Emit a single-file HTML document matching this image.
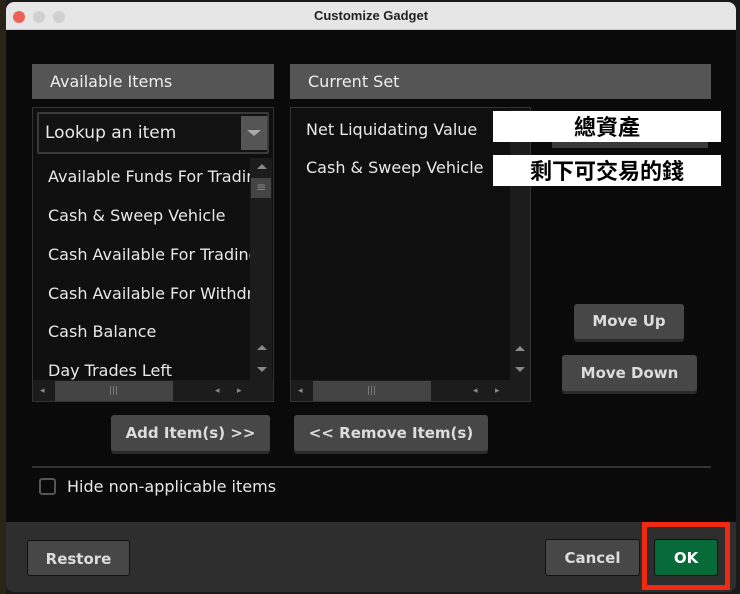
<!DOCTYPE html>
<html><head><meta charset="utf-8"><style>
*{margin:0;padding:0;box-sizing:border-box}
body{width:740px;height:594px;background:#1a1a1a;position:relative;overflow:hidden;font-family:"DejaVu Sans","Liberation Sans",sans-serif;color:#e8e8e8}
.a{position:absolute}
.hdr{background:#555;color:#eee;font-size:16px;padding-left:18px;line-height:35px}
.box{border:1px solid #333;background:#0f0f0f}
.it{position:absolute;font-size:16px;color:#e8e8e8;white-space:nowrap}
.btn{position:absolute;background:#474747;border-radius:3px;color:#ddd;font-weight:bold;font-size:15px;text-align:center;box-shadow:0 3px 0 #2a2a2a}
.cjk{font-family:"Noto Sans CJK TC",sans-serif;font-weight:bold;color:#000;background:#fff;text-align:center;font-size:22px;line-height:31px}
.tri{position:absolute;width:0;height:0}
.g{position:absolute;color:#888;font-size:9px;line-height:10px}
</style></head><body>
<div class="a" style="left:0;top:0;width:6px;height:594px;background:#2a2418"></div>
<div class="a" style="left:6px;top:2px;width:730px;height:590px;background:#0a0a0a;border-radius:8px;overflow:hidden">
 <div class="a" style="left:0;top:0;width:730px;height:28px;background:#e6e6e6;border-bottom:1px solid #c8c8c8"></div>
 <div class="a" style="left:7px;top:9px;width:12px;height:12px;border-radius:50%;background:#ed5f57"></div>
 <div class="a" style="left:27px;top:9px;width:12px;height:12px;border-radius:50%;background:#d0d0d0"></div>
 <div class="a" style="left:47px;top:9px;width:12px;height:12px;border-radius:50%;background:#d0d0d0"></div>
 <div class="a" style="left:0;top:6px;width:730px;text-align:center;font-size:13px;font-weight:bold;color:#222;font-family:'Liberation Sans',sans-serif">Customize Gadget</div>
 <div class="a" style="left:0;top:520px;width:730px;height:70px;background:#2e2e2e"></div>
</div>
<div class="a hdr" style="left:32px;top:64px;width:242px;height:35px">Available Items</div>
<div class="a hdr" style="left:290px;top:64px;width:421px;height:35px">Current Set</div>

<div class="a box" style="left:32px;top:107px;width:242px;height:295px"></div>
<div class="a" style="left:37px;top:112px;width:232px;height:42px;border:2px solid #3a3a3a;background:#121212;border-radius:2px"></div>
<div class="it" style="left:45px;top:123px;font-size:17px">Lookup an item</div>
<div class="a" style="left:241px;top:116px;width:26px;height:34px;background:#555"></div>
<div class="tri" style="left:247px;top:130px;border-left:7px solid transparent;border-right:7px solid transparent;border-top:6px solid #aaa"></div>
<div class="a" style="left:250px;top:158px;width:22px;height:222px;background:#1c1c1c"></div>
<div class="a" style="left:251px;top:178px;width:20px;height:20px;background:#444"></div>
<div class="g" style="left:256px;top:182px;font-size:12px">≡</div>
<div class="tri" style="left:257px;top:164px;border-left:5px solid transparent;border-right:5px solid transparent;border-bottom:5px solid #888"></div>
<div class="tri" style="left:257px;top:345px;border-left:5px solid transparent;border-right:5px solid transparent;border-bottom:5px solid #888"></div>
<div class="tri" style="left:257px;top:367px;border-left:5px solid transparent;border-right:5px solid transparent;border-top:5px solid #888"></div>
<div class="a" style="left:33px;top:380px;width:240px;height:21px;background:#1c1c1c;overflow:hidden"></div>
<div class="a" style="left:55px;top:381px;width:118px;height:20px;background:#444"></div>
<div class="g" style="left:40px;top:386px">◂</div>
<div class="g" style="left:109px;top:386px">|||</div>
<div class="g" style="left:215px;top:386px">◂</div>
<div class="g" style="left:237px;top:386px">▸</div>
<div class="a" style="left:38px;top:159px;width:212px;height:221px;overflow:hidden">
 <div class="it" style="left:10px;top:8px">Available Funds For Trading</div>
 <div class="it" style="left:10px;top:47px">Cash &amp; Sweep Vehicle</div>
 <div class="it" style="left:10px;top:86px">Cash Available For Trading</div>
 <div class="it" style="left:10px;top:125px">Cash Available For Withdrawal</div>
 <div class="it" style="left:10px;top:163px">Cash Balance</div>
 <div class="it" style="left:10px;top:202px">Day Trades Left</div>
</div>

<div class="a box" style="left:290px;top:107px;width:241px;height:295px"></div>
<div class="a" style="left:510px;top:110px;width:20px;height:270px;background:#1c1c1c"></div>
<div class="tri" style="left:515px;top:346px;border-left:5px solid transparent;border-right:5px solid transparent;border-bottom:5px solid #888"></div>
<div class="tri" style="left:515px;top:367px;border-left:5px solid transparent;border-right:5px solid transparent;border-top:5px solid #888"></div>
<div class="a" style="left:291px;top:380px;width:239px;height:21px;background:#1c1c1c"></div>
<div class="a" style="left:313px;top:381px;width:118px;height:20px;background:#444"></div>
<div class="g" style="left:298px;top:386px">◂</div>
<div class="g" style="left:367px;top:386px">|||</div>
<div class="g" style="left:473px;top:386px">◂</div>
<div class="g" style="left:495px;top:386px">▸</div>
<div class="it" style="left:306px;top:120px">Net Liquidating Value</div>
<div class="it" style="left:306px;top:158px">Cash &amp; Sweep Vehicle</div>

<div class="a" style="left:552px;top:138px;width:156px;height:10px;background:#3a3a3a"></div>
<div class="a cjk" style="left:493px;top:111px;width:228px;height:31px">總資產</div>
<div class="a cjk" style="left:493px;top:155px;width:228px;height:31px">剩下可交易的錢</div>

<div class="btn" style="left:574px;top:304px;width:110px;height:35px;line-height:35px">Move Up</div>
<div class="btn" style="left:562px;top:355px;width:135px;height:36px;line-height:36px">Move Down</div>
<div class="btn" style="left:111px;top:415px;width:159px;height:36px;line-height:36px">Add Item(s) &gt;&gt;</div>
<div class="btn" style="left:294px;top:415px;width:194px;height:36px;line-height:36px">&lt;&lt; Remove Item(s)</div>

<div class="a" style="left:32px;top:466px;width:679px;height:2px;background:#333"></div>
<div class="a" style="left:39px;top:478px;width:17px;height:17px;border:2px solid #555;border-radius:3px"></div>
<div class="it" style="left:67px;top:477px">Hide non-applicable items</div>

<div class="btn" style="left:27px;top:540px;width:103px;height:36px;line-height:36px;border:1px solid #111;box-shadow:none">Restore</div>
<div class="btn" style="left:545px;top:539px;width:95px;height:37px;line-height:37px;border:1px solid #111;box-shadow:none">Cancel</div>
<div class="a" style="left:642px;top:522px;width:88px;height:68px;border:5px solid #f02a10"></div>
<div class="btn" style="left:654px;top:539px;width:64px;height:37px;line-height:37px;background:#066b38;color:#fff;border:1px solid #111;box-shadow:none">OK</div>
</body></html>
